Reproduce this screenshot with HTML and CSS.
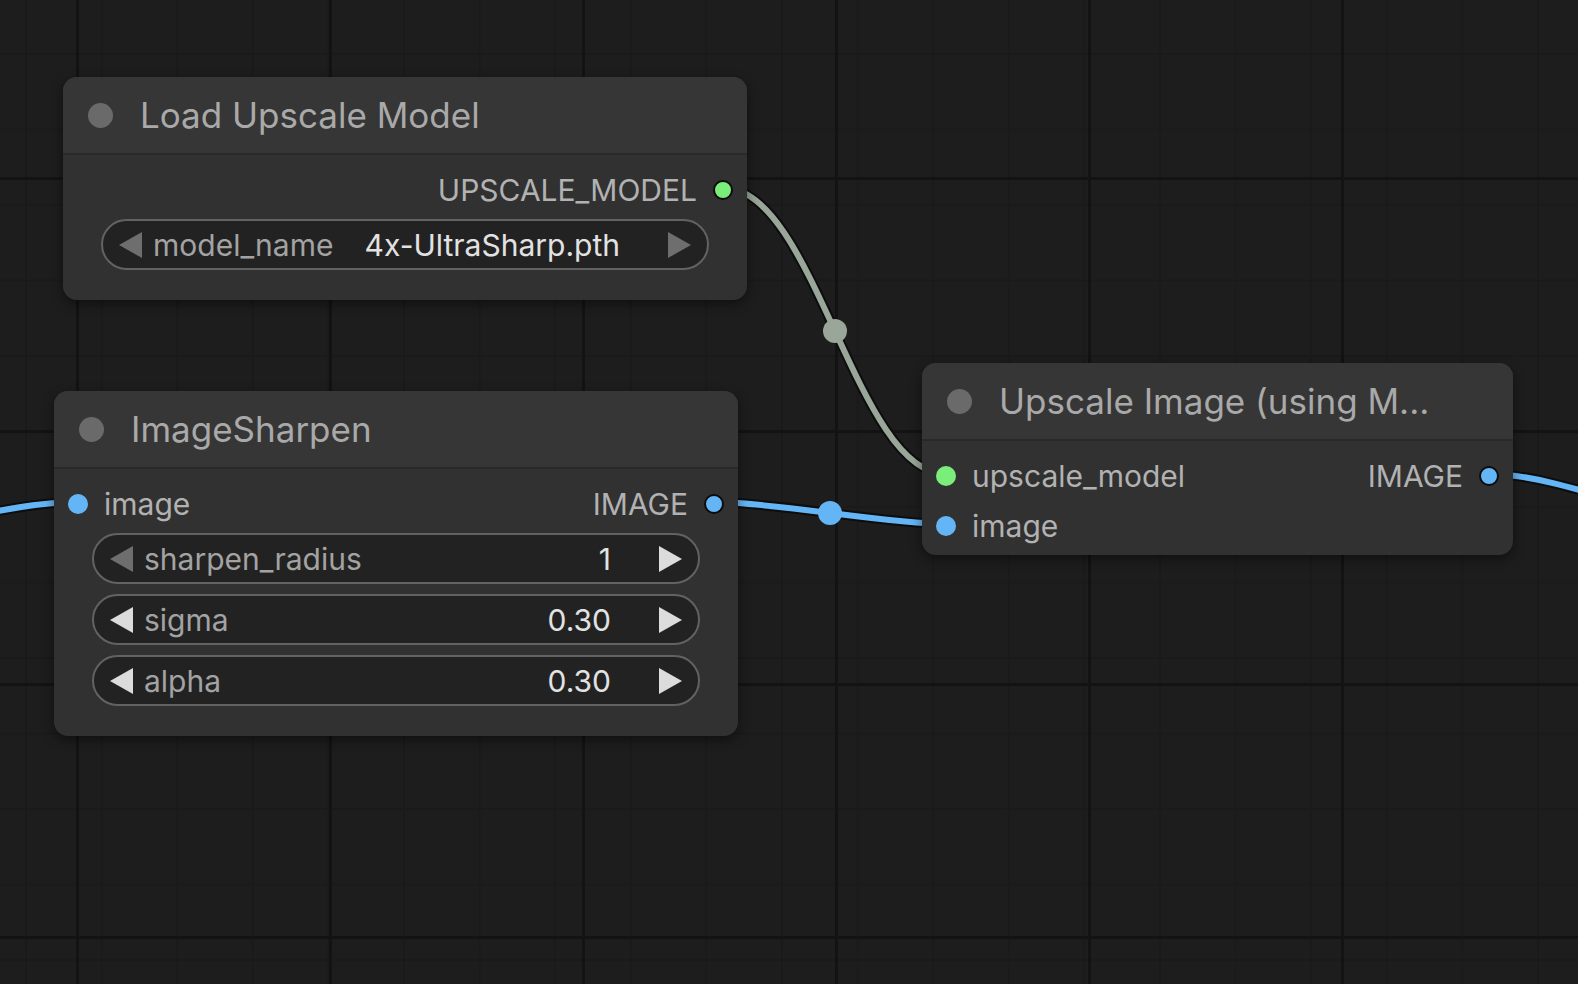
FILE: index.html
```html
<!DOCTYPE html>
<html lang="en">
<head>
  <meta charset="UTF-8">
  <title>Upscale workflow</title>
  <link rel="stylesheet" href="styles.css">
</head>
<body>
  <div class="canvas">
    <!-- links sit under the nodes -->
    <svg class="links" width="1578" height="984" viewBox="0 0 1578 984">
      <g fill="none" stroke-linecap="round">
        <path class="link-edge" d="M724 188 C814.5 188 855.5 474 946 474"/>
        <path class="link-model" d="M724 188 C814.5 188 855.5 474 946 474"/>
        <path class="link-edge" d="M714.5 502 C772.6 502 887.9 524 946 524"/>
        <path class="link-image" d="M714.5 502 C772.6 502 887.9 524 946 524"/>
        <path class="link-edge" d="M-260 560 C-160 560 -20 502 78 502"/>
        <path class="link-image" d="M-260 560 C-160 560 -20 502 78 502"/>
        <path class="link-edge" d="M1490 474 C1570 474 1700 540 1800 540"/>
        <path class="link-image" d="M1490 474 C1570 474 1700 540 1800 540"/>
      </g>
      <circle class="marker-model" cx="835" cy="331" r="12"/>
      <circle class="marker-image" cx="830" cy="513" r="12"/>
    </svg>

    <div class="node node-loader">
      <div class="node-title"><span class="title-dot"></span>Load Upscale Model</div>
      <div class="node-body">
        <div class="slot-row">
          <span class="slot-out">UPSCALE_MODEL<span class="dot dot-model dot-outline"></span></span>
        </div>
        <div class="widget">
          <span class="arrow arrow-left dim"></span>
          <span class="widget-label">model_name</span>
          <span class="widget-value">4x-UltraSharp.pth</span>
          <span class="arrow arrow-right dim"></span>
        </div>
      </div>
    </div>

    <div class="node node-sharpen">
      <div class="node-title"><span class="title-dot"></span>ImageSharpen</div>
      <div class="node-body">
        <div class="slot-row">
          <span class="slot-in"><span class="dot dot-image"></span>image</span>
          <span class="slot-out">IMAGE<span class="dot dot-image dot-outline"></span></span>
        </div>
        <div class="widget">
          <span class="arrow arrow-left dim"></span>
          <span class="widget-label">sharpen_radius</span>
          <span class="widget-value">1</span>
          <span class="arrow arrow-right"></span>
        </div>
        <div class="widget">
          <span class="arrow arrow-left"></span>
          <span class="widget-label">sigma</span>
          <span class="widget-value">0.30</span>
          <span class="arrow arrow-right"></span>
        </div>
        <div class="widget">
          <span class="arrow arrow-left"></span>
          <span class="widget-label">alpha</span>
          <span class="widget-value">0.30</span>
          <span class="arrow arrow-right"></span>
        </div>
      </div>
    </div>

    <div class="node node-upscale">
      <div class="node-title"><span class="title-dot"></span>Upscale Image (using M...</div>
      <div class="node-body slots-only">
        <div class="slot-row">
          <span class="slot-in"><span class="dot dot-model"></span>upscale_model</span>
          <span class="slot-out">IMAGE<span class="dot dot-image dot-outline"></span></span>
        </div>
        <div class="slot-row">
          <span class="slot-in"><span class="dot dot-image"></span>image</span>
        </div>
      </div>
    </div>
  </div>
</body>
</html>
```

FILE: styles.css
```css
body {
  margin: 0;
  padding: 0;
  overflow: hidden;
  font-family: 'Inter', 'Noto Sans', sans-serif;
  background-color: #1d1d1d;
}
.canvas {
  position: relative;
  width: 1578px;
  height: 984px;
  background-color: #1d1d1d;
  background-image:
    linear-gradient(to right, #131313 3px, transparent 3px),
    linear-gradient(to bottom, #131313 3px, transparent 3px),
    linear-gradient(to right, #1a1a1a 2px, transparent 2px),
    linear-gradient(to bottom, #1a1a1a 2px, transparent 2px);
  background-size: 253px 100%, 100% 253px, 75.6px 100%, 100% 75.5px;
  background-position: 76px 0, 0 177px, 25px 0, 0 53px;
}
.links {
  position: absolute;
  left: 0;
  top: 0;
}
.link-edge {
  stroke: #0d0d0d;
  stroke-width: 10;
}
.link-model {
  stroke: #9aa69a;
  stroke-width: 6;
}
.link-image {
  stroke: #64b5f6;
  stroke-width: 6;
}
.marker-model {
  fill: #9aa69a;
}
.marker-image {
  fill: #64b5f6;
}

/* nodes */
.node {
  position: absolute;
  background-color: #313131;
  border-radius: 14px;
  box-shadow: 0 4px 12px rgba(0, 0, 0, 0.45);
  overflow: hidden;
}
.node-loader {
  left: 63px;
  top: 77px;
  width: 684px;
}
.node-sharpen {
  left: 54px;
  top: 391px;
  width: 684px;
}
.node-upscale {
  left: 922px;
  top: 363px;
  width: 591px;
}
.node-title {
  display: flex;
  align-items: center;
  height: 76px;
  padding-left: 25px;
  background-color: #363636;
  border-bottom: 2px solid #292929;
  color: #a9a9a9;
  font-size: 35px;
  white-space: nowrap;
}
.title-dot {
  width: 25px;
  height: 25px;
  border-radius: 50%;
  background-color: #6a6a6a;
  margin-right: 27px;
  flex-shrink: 0;
}
.node-body {
  display: flex;
  flex-direction: column;
  padding: 10px 0 30px;
}
.node-body.slots-only {
  padding-bottom: 4px;
}

/* slots */
.slot-row {
  display: flex;
  align-items: center;
  height: 50px;
  padding: 0 14px;
  color: #b2b2b2;
  font-size: 30px;
}
.slot-in {
  display: flex;
  align-items: center;
  gap: 16px;
}
.slot-out {
  display: flex;
  align-items: center;
  gap: 16px;
  margin-left: auto;
}
.dot {
  width: 20px;
  height: 20px;
  border-radius: 50%;
  box-sizing: border-box;
  flex-shrink: 0;
}
.dot-model {
  background-color: #7bed7b;
}
.dot-image {
  background-color: #64b5f6;
}
.dot-outline {
  border: 2.5px solid #0c0c0c;
}

/* widgets */
.widget {
  display: flex;
  align-items: center;
  height: 51px;
  margin: 4px 38px 0;
  padding: 0 16px;
  box-sizing: border-box;
  background-color: #222;
  border: 2px solid #626262;
  border-radius: 26px;
  font-size: 30px;
}
.widget + .widget {
  margin-top: 10px;
}
.widget-label {
  flex: 1;
  margin-left: 11px;
  color: #a3a3a3;
  white-space: nowrap;
  overflow: hidden;
}
.widget-value {
  margin-right: 48px;
  color: #e2e2e2;
  white-space: nowrap;
}
.arrow {
  width: 0;
  height: 0;
  border-top: 13px solid transparent;
  border-bottom: 13px solid transparent;
  flex-shrink: 0;
}
.arrow-left {
  border-right: 23px solid #dcdcdc;
}
.arrow-right {
  border-left: 23px solid #dcdcdc;
}
.arrow-left.dim {
  border-right-color: #6e6e6e;
}
.arrow-right.dim {
  border-left-color: #6e6e6e;
}
```
